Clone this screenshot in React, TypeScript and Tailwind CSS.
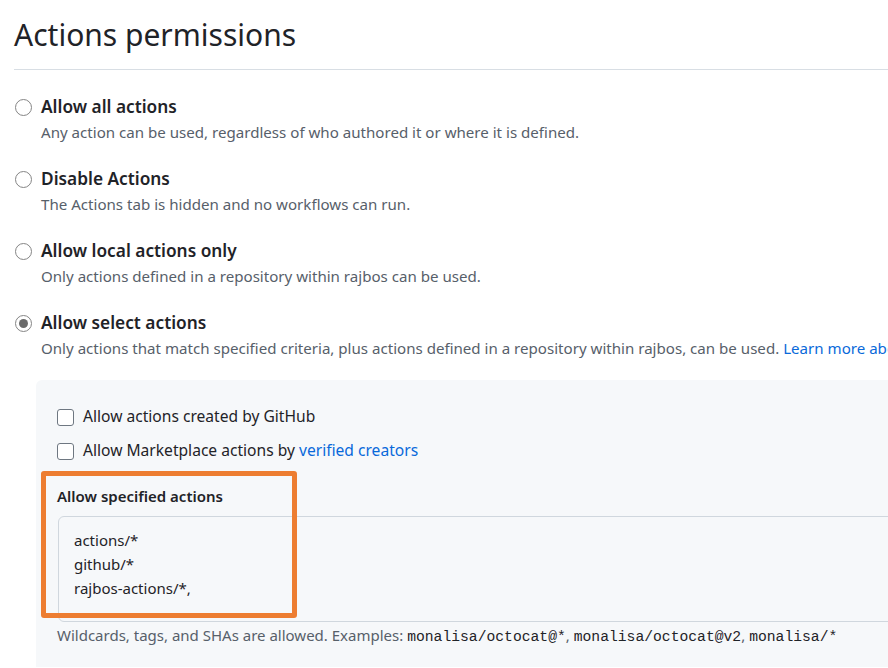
import { useState } from "react";

type Option = {
  id: string;
  title: string;
  desc: string;
  link?: string;
};

const options: Option[] = [
  { id: "all", title: "Allow all actions", desc: "Any action can be used, regardless of who authored it or where it is defined." },
  { id: "disable", title: "Disable Actions", desc: "The Actions tab is hidden and no workflows can run." },
  { id: "local", title: "Allow local actions only", desc: "Only actions defined in a repository within rajbos can be used." },
  {
    id: "select",
    title: "Allow select actions",
    desc: "Only actions that match specified criteria, plus actions defined in a repository within rajbos, can be used.",
    link: "Learn more about allowing specific actions to run",
  },
];

function Radio({ checked }: { checked: boolean }) {
  return (
    <span className="flex h-[17px] w-[17px] shrink-0 items-center justify-center rounded-full border border-[#858585] bg-white">
      {checked && <span className="h-[9px] w-[9px] rounded-full bg-[#6b6b6b]" />}
    </span>
  );
}

function Checkbox() {
  return <span className="h-[17px] w-[17px] shrink-0 rounded-[3px] border border-[#6e7781] bg-white" />;
}

function App() {
  const [selected] = useState("select");

  return (
    <div className="h-[668px] w-[888px] overflow-hidden bg-white pl-[14px] font-['Noto_Sans',sans-serif] text-[#1f2328]">
      <h2 className="h-[70px] border-b border-[#d8dee4] pt-[15px] text-[30px] leading-[40px] font-normal">
        Actions permissions
      </h2>

      <div className="mt-[25px] flex flex-col gap-[24px]">
        {options.map((o) => (
          <div key={o.id} className="flex flex-col">
            <div className="flex h-[24px] items-center gap-[9px] pl-[1px]">
              <Radio checked={selected === o.id} />
              <span className="text-[17.3px] font-semibold whitespace-nowrap">{o.title}</span>
            </div>
            <p className="h-[24px] overflow-hidden pl-[27px] pt-[1px] text-[15.1px] leading-[24px] whitespace-nowrap text-[#57606a]">
              {o.desc}
              {o.link && <span className="text-[#0969da]"> {o.link}</span>}
            </p>
          </div>
        ))}
      </div>

      <div className="ml-[22px] mt-[21px] w-[900px] rounded-tl-md bg-[#f6f8fa] pl-[21px] pt-[25px] pb-[20px]">
        <div className="flex flex-col gap-[10px]">
          <label className="flex h-[24px] items-center gap-[9px] text-[15.6px] whitespace-nowrap">
            <Checkbox />
            Allow actions created by GitHub
          </label>
          <label className="flex h-[24px] items-center gap-[9px] text-[15.6px] whitespace-nowrap">
            <Checkbox />
            <span>
              Allow Marketplace actions by <span className="text-[#0969da]">verified creators</span>
            </span>
          </label>
        </div>

        <div className="relative mt-[20.5px]">
          <div className="h-[24px] text-[15px] leading-[24px] font-semibold">Allow specified actions</div>
          <div className="mt-[8px] ml-[1px] h-[106px] rounded-md border border-[#d0d7de] bg-[#f6f8fa] pl-[15px] pt-[11px] text-[15px] leading-[24px]">
            <div>actions/*</div>
            <div>github/*</div>
            <div>rajbos-actions/*,</div>
          </div>
          <div className="absolute -left-[16px] -top-[13px] h-[147px] w-[256px] rounded-[3px] border-[5px] border-[#ed7d31]" />
          <p className="mt-[1px] h-[24px] text-[15px] leading-[24px] whitespace-nowrap text-[#57606a]">
            Wildcards, tags, and SHAs are allowed. Examples:{" "}
            <code className="font-['Liberation_Mono',monospace] text-[14.7px] text-[#1f2328]">monalisa/octocat@*</code>,{" "}
            <code className="font-['Liberation_Mono',monospace] text-[14.7px] text-[#1f2328]">monalisa/octocat@v2</code>,{" "}
            <code className="font-['Liberation_Mono',monospace] text-[14.7px] text-[#1f2328]">monalisa/*</code>
          </p>
        </div>
      </div>
    </div>
  );
}

export default App;
